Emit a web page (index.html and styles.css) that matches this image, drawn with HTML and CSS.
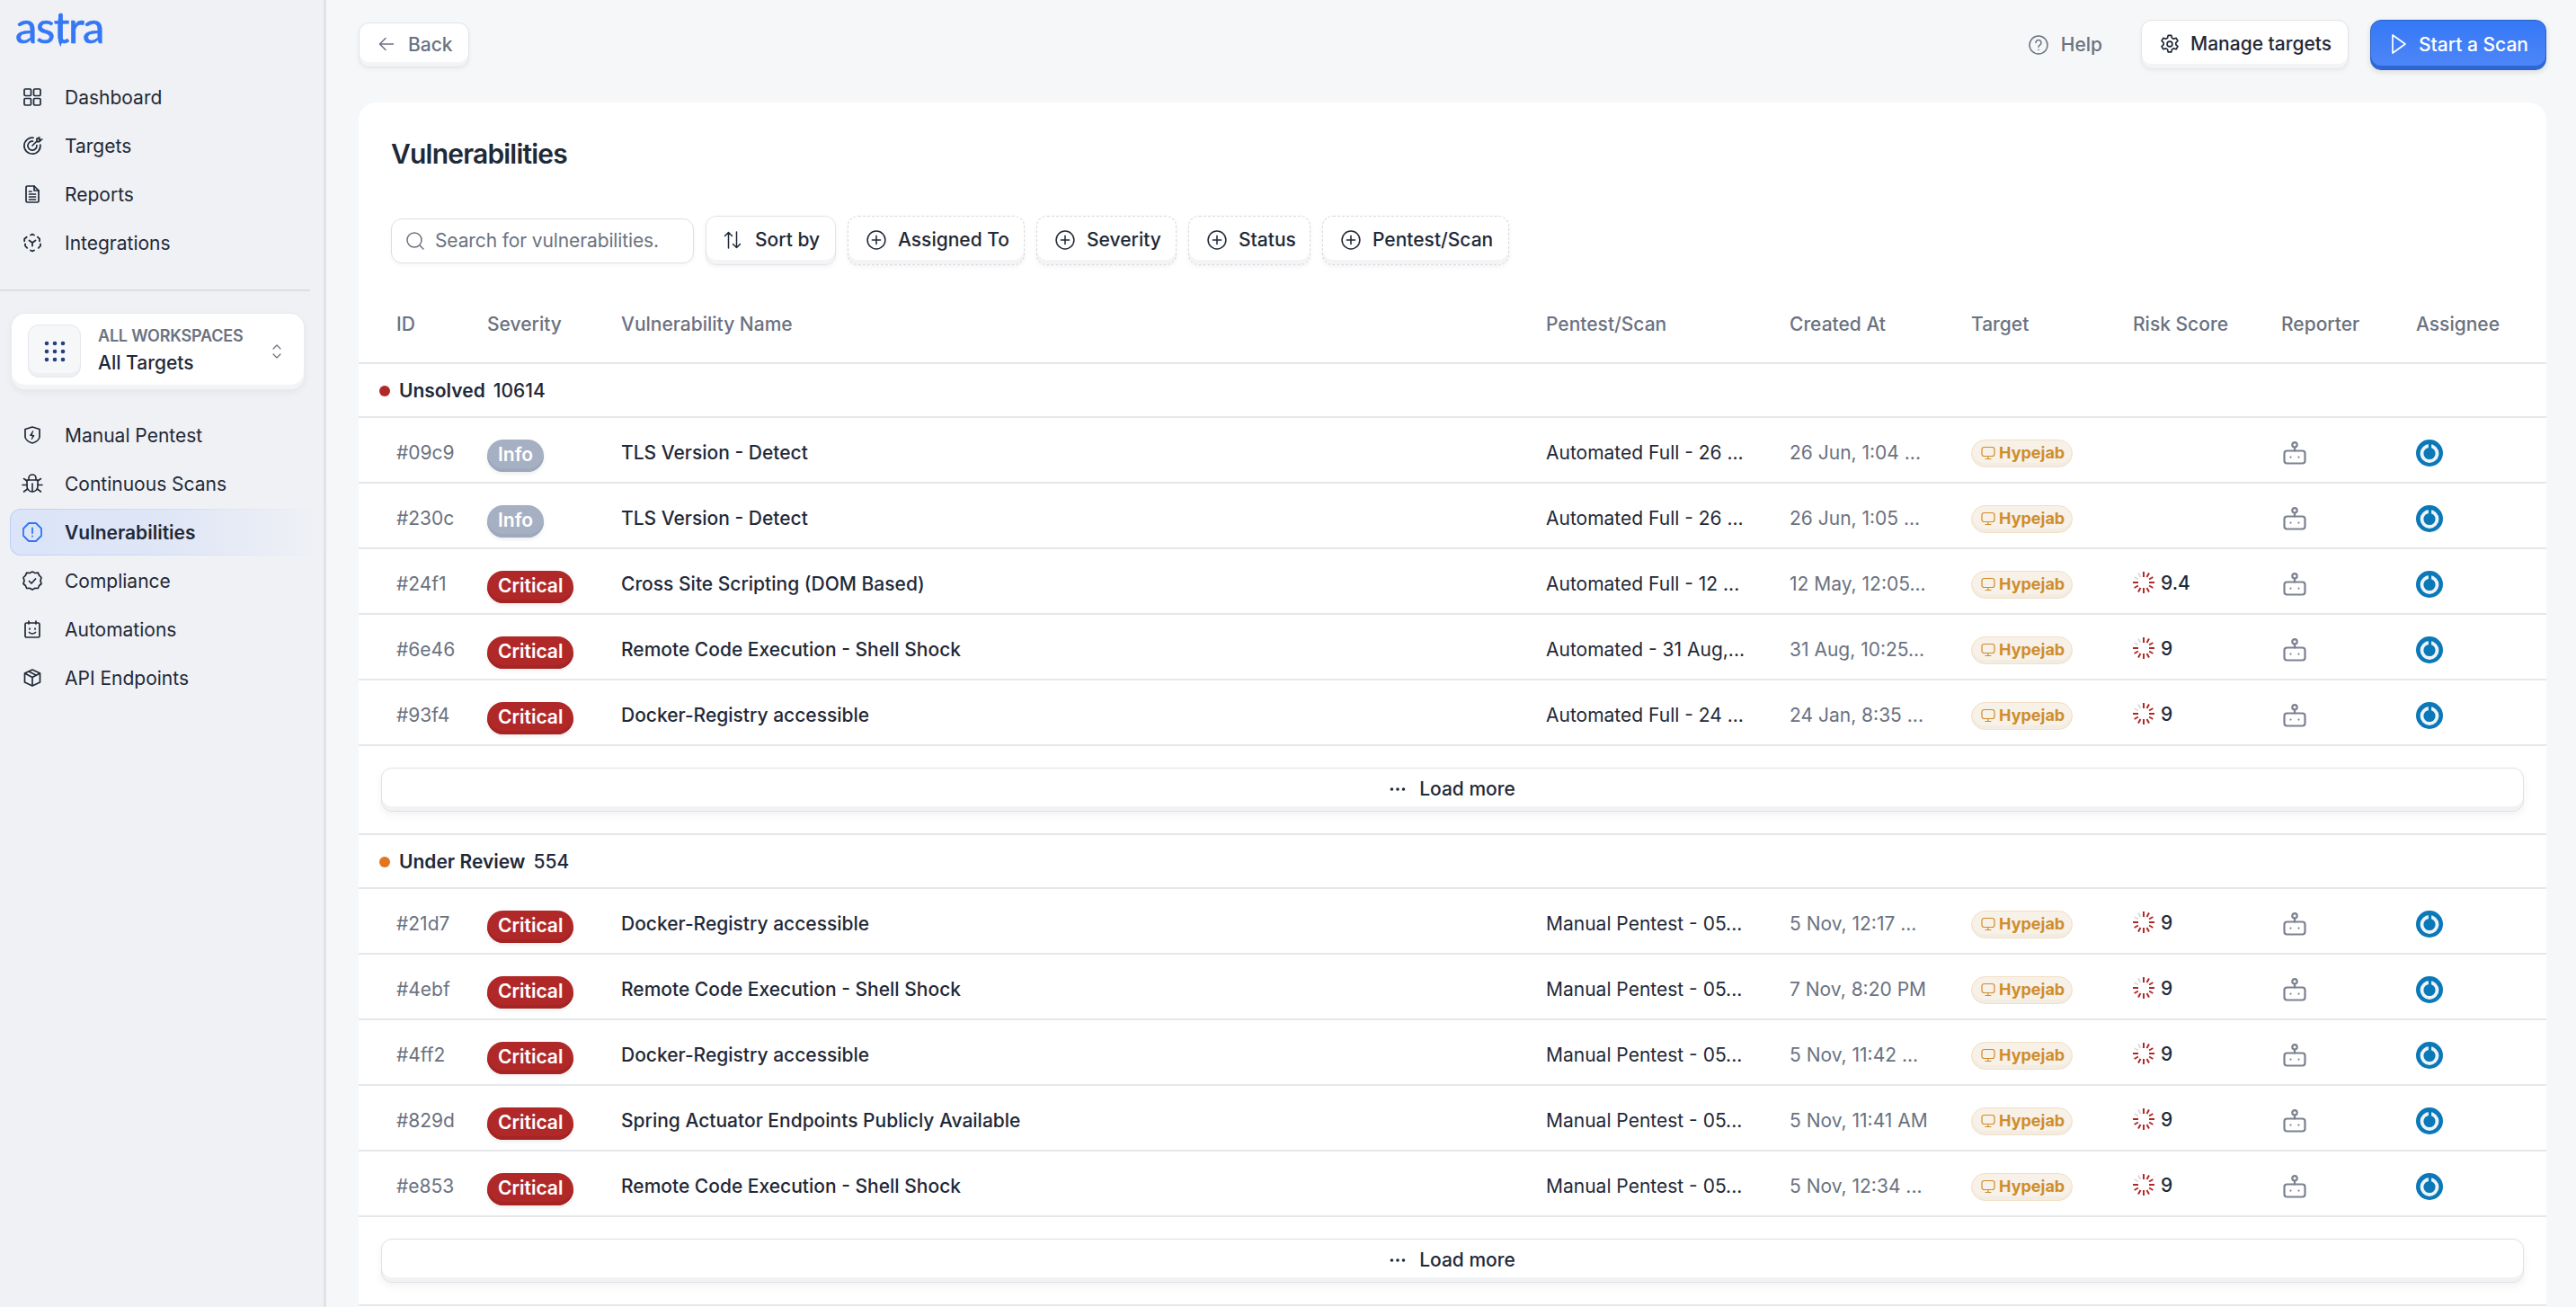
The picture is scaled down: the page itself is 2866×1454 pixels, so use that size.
FILE: index.html
```html
<!DOCTYPE html>
<html lang="en">

<head>
	<meta charset="UTF-8" />
	<title>Vulnerabilities</title>
	<link rel="stylesheet" href="styles.css">
</head>

<body>
	<svg class="icon-defs" width="0" height="0">
		<symbol id="i-monitor" viewBox="0 0 16 16" fill="none" stroke="currentColor" stroke-width="1.2" stroke-linecap="round" stroke-linejoin="round">
			<rect x="1" y="1.5" width="14" height="10" rx="2.5" />
			<path d="M8 11.5v2.5M5 14.5h6" />
		</symbol>
		<symbol id="i-robot" viewBox="0 0 26 26" fill="none" stroke="currentColor" stroke-width="2.2" stroke-linecap="round" stroke-linejoin="round">
			<circle cx="13" cy="3.800" r="2.700" />
			<path d="M13 6.500V10.500" />
			<rect x="1.500" y="10.500" width="23" height="14" rx="3" />
			<path d="M8.500 17.500v.1M17.500 17.500v.1" />
		</symbol>
		<symbol id="i-assignee" viewBox="0 0 30 30">
			<circle cx="15" cy="15" r="15" fill="#0b78b8" />
			<circle cx="15" cy="15.500" r="8.500" fill="none" stroke="#eef4f8" stroke-width="3.800" />
			<path d="M15.500 4.500v10" stroke="#0b78b8" stroke-width="3.200" stroke-linecap="round" />
		</symbol>
		<symbol id="i-spinner" viewBox="0 0 24 24" fill="none" stroke-width="2">
			<g stroke="#b12828">
				<path d="M12 0v6" />
				<path d="M18 1.600l-2.500 4.300" />
				<path d="M22.400 6l-4.300 2.500" />
				<path d="M24 12h-6" />
				<path d="M22.400 18l-4.300-2.500" />
				<path d="M18 22.400l-2.500-4.300" />
				<path d="M12 24v-6" />
				<path d="M6 22.400l2.500-4.300" />
				<path d="M1.600 18l4.300-2.500" />
				<path d="M0 12h6" />
			</g>
			<g stroke="#dcdcdc">
				<path d="M1.600 6l4.300 2.500" />
				<path d="M6 1.600l2.500 4.300" />
			</g>
		</symbol>
		<symbol id="i-plus" viewBox="0 0 20 20" fill="none" stroke="currentColor" stroke-width="1.4" stroke-linecap="round">
			<circle cx="10" cy="10" r="9" />
			<path d="M10 5.8v8.4M5.8 10h8.4" />
		</symbol>
		<symbol id="i-dots" viewBox="0 0 18 6" fill="currentColor">
			<circle cx="2.5" cy="3" r="1.8" />
			<circle cx="9" cy="3" r="1.8" />
			<circle cx="15.5" cy="3" r="1.8" />
		</symbol>
	</svg>

	<div class="layout">
		<aside class="sidebar">
			<div class="logo">as<span class="logo-t">t</span>ra</div>
			<ul class="nav">
				<li class="nav-item">
					<svg class="nav-icon" viewBox="0 0 20 20" fill="none" stroke="currentColor" stroke-width="1.7" stroke-linejoin="round">
						<rect x="1" y="1" width="7.5" height="7.5" rx="1.2" />
						<rect x="11.5" y="1" width="7.5" height="7.5" rx="1.2" />
						<rect x="1" y="11.5" width="7.5" height="7.5" rx="1.2" />
						<rect x="11.5" y="11.5" width="7.5" height="7.5" rx="1.2" />
					</svg>
					<span>Dashboard</span>
				</li>
				<li class="nav-item">
					<svg class="nav-icon" viewBox="0 0 20 20" fill="none" stroke="currentColor" stroke-width="1.7" stroke-linecap="round">
						<path d="M11 1.3A9 9 0 1 0 18.8 9" />
						<path d="M10.5 5.2A5 5 0 1 0 14.9 9.6" />
						<path d="M10 10l5-5M15 5V2.2l2.6-1.2v2.4H20L17.6 5.6H15" />
					</svg>
					<span>Targets</span>
				</li>
				<li class="nav-item">
					<svg class="nav-icon" viewBox="0 0 20 20" fill="none" stroke="currentColor" stroke-width="1.7" stroke-linejoin="round" stroke-linecap="round">
						<path d="M3 2.5A1.5 1.5 0 0 1 4.5 1H12l5 5v11.500A1.500 1.500 0 0 1 15.500 19h-11A1.500 1.500 0 0 1 3 17.500z" />
						<path d="M12 1v5h5M6.500 10h7M6.500 13h7M6.500 16h7M6.500 7h2.500" />
					</svg>
					<span>Reports</span>
				</li>
				<li class="nav-item">
					<svg class="nav-icon" viewBox="0 0 20 20" fill="none" stroke="currentColor" stroke-width="1.8" stroke-linecap="round" stroke-linejoin="round">
						<path d="M8 1.500l2-.8 2 .8M15.800 3.700l2.200 2v2.500M19 11.500v2l-2.200 2.300M12 18.500l-2 .8-2-.8M4.200 15.800L2 13.500v-2M1.200 8.200V5.700l2.500-2" />
						<path d="M6.500 7.500L10 10l3.500-2.500M10 10v3.500" />
					</svg>
					<span>Integrations</span>
				</li>
			</ul>
			<div class="sidebar-divider"></div>
			<div class="workspace">
				<div class="workspace-tile">
					<svg width="24" height="24" viewBox="0 0 24 24" fill="#24407c">
						<circle cx="3" cy="3" r="2.300" />
						<circle cx="12" cy="3" r="2.300" />
						<circle cx="21" cy="3" r="2.300" />
						<circle cx="3" cy="12" r="2.300" />
						<circle cx="12" cy="12" r="2.300" />
						<circle cx="21" cy="12" r="2.300" />
						<circle cx="3" cy="21" r="2.300" />
						<circle cx="12" cy="21" r="2.300" />
						<circle cx="21" cy="21" r="2.300" />
					</svg>
				</div>
				<div class="workspace-text">
					<div class="workspace-label">ALL WORKSPACES</div>
					<div class="workspace-name">All Targets</div>
				</div>
				<svg class="workspace-chevrons" width="10" height="16" viewBox="0 0 10 16" fill="none" stroke="#6b7280" stroke-width="1.200" stroke-linecap="round" stroke-linejoin="round">
					<path d="M1 5l4-4 4 4M1 11l4 4 4-4" />
				</svg>
			</div>
			<ul class="nav">
				<li class="nav-item">
					<svg class="nav-icon" viewBox="0 0 20 20" fill="none" stroke="currentColor" stroke-width="1.700" stroke-linejoin="round">
						<path d="M2 3.500L10 1l8 2.500v8.500c0 3-4 5.800-8 7-4-1.200-8-4-8-7z" />
						<path d="M11 5l-3.500 5.500h4.500L9 15" fill="currentColor" stroke-width="1" />
					</svg>
					<span>Manual Pentest</span>
				</li>
				<li class="nav-item">
					<svg class="nav-icon nav-icon-bug" viewBox="0 0 24 24" fill="none" stroke="currentColor" stroke-width="1.600" stroke-linecap="round" stroke-linejoin="round">
						<path d="M8 8V6a4 4 0 0 1 8 0v2" />
						<path d="M6 8h12v7a6 6 0 0 1-12 0z" />
						<path d="M12 12v9M6 9L2.500 6.500M18 9l3.500-2.500M6 13.500H1M18 13.500h5M6.500 18L2.500 21M17.500 18l4 3" />
					</svg>
					<span>Continuous Scans</span>
				</li>
				<li class="nav-item nav-item-active">
					<svg class="nav-icon nav-icon-active" viewBox="0 0 22 22" fill="none" stroke="currentColor" stroke-width="1.800" stroke-linecap="round" stroke-linejoin="round">
						<path d="M7 1h8l6 6v8l-6 6H7l-6-6V7z" />
						<path d="M11 6.500v5.500M11 15.500v.2" />
					</svg>
					<span>Vulnerabilities</span>
				</li>
				<li class="nav-item">
					<svg class="nav-icon nav-icon-wide" viewBox="0 0 22 22" fill="none" stroke="currentColor" stroke-width="1.700" stroke-linecap="round" stroke-linejoin="round">
						<path d="M11 1l3 1.500 3.300-.3 1.300 3 2.400 2.300-1 3.500 1 3.500-2.400 2-1.300 3-3.300-.2-3 1.700-3-1.700-3.300.2-1.300-3L1 14.500l1-3.500-1-3.500 2.400-2.300 1.300-3 3.300.3z" />
						<path d="M7.500 11.500l2.500 2.500 4.500-5" />
					</svg>
					<span>Compliance</span>
				</li>
				<li class="nav-item">
					<svg class="nav-icon" viewBox="0 0 20 20" fill="none" stroke="currentColor" stroke-width="1.700" stroke-linecap="round" stroke-linejoin="round">
						<rect x="2" y="3" width="16" height="16" rx="1.500" />
						<path d="M6 1v3M14 1v3M7 9v1M13 9v1M6.500 13.500c2 2 5 2 7 0" />
					</svg>
					<span>Automations</span>
				</li>
				<li class="nav-item">
					<svg class="nav-icon" viewBox="0 0 20 20" fill="none" stroke="currentColor" stroke-width="1.700" stroke-linejoin="round">
						<path d="M10 1l8.500 4v10L10 19l-8.500-4V5z" />
						<path d="M1.500 5L10 9.500 18.500 5M10 9.500V19M6 3l8.500 4.200" />
					</svg>
					<span>API Endpoints</span>
				</li>
			</ul>
		</aside>

		<main class="main">
			<div class="topbar">
				<button class="btn btn-back">
					<svg width="18" height="16" viewBox="0 0 18 16" fill="none" stroke="currentColor" stroke-width="1.500" stroke-linecap="round" stroke-linejoin="round">
						<path d="M16.500 8H1.500M8 1.500L1.500 8 8 14.500" />
					</svg>
					Back
				</button>
				<div class="topbar-right">
					<span class="help">
						<svg width="22" height="22" viewBox="0 0 22 22" fill="none" stroke="currentColor" stroke-width="1.500" stroke-linecap="round" stroke-linejoin="round">
							<circle cx="11" cy="11" r="10" />
							<path d="M8 8.500a3 3 0 1 1 4.500 2.600c-1 .6-1.500 1-1.500 2.200M11 16.300v.1" />
						</svg>
						Help
					</span>
					<button class="btn btn-manage">
						<svg width="22" height="22" viewBox="0 0 24 24" fill="none" stroke="currentColor" stroke-width="1.800" stroke-linecap="round" stroke-linejoin="round">
							<circle cx="12" cy="12" r="3.200" />
							<path d="M10 1.500h4l.7 3.200 2 1.100 3.100-1 2 3.400-2.400 2.200v2.300l2.400 2.200-2 3.400-3.100-1-2 1.100-.7 3.200h-4l-.7-3.200-2-1.100-3.100 1-2-3.400 2.400-2.200v-2.300L2.200 8.200l2-3.400 3.100 1 2-1.100z" />
						</svg>
						Manage targets
					</button>
					<button class="btn btn-primary">
						<svg width="18" height="24" viewBox="0 0 18 24" fill="none" stroke="currentColor" stroke-width="1.700" stroke-linejoin="round">
							<path d="M2 2l14 10L2 22z" />
						</svg>
						Start a Scan
					</button>
				</div>
			</div>

			<section class="card">
				<h1 class="card-title">Vulnerabilities</h1>
				<div class="filters">
					<label class="search">
						<svg width="20" height="20" viewBox="0 0 20 20" fill="none" stroke="#6b7280" stroke-width="1.500" stroke-linecap="round">
							<circle cx="9" cy="9" r="8" />
							<path d="M15 15l4 4" />
						</svg>
						<span class="search-text">Search for vulnerabilities.</span>
					</label>
					<button class="btn btn-filter btn-sort">
						<svg width="20" height="20" viewBox="0 0 20 20" fill="none" stroke="currentColor" stroke-width="1.500" stroke-linecap="round" stroke-linejoin="round">
							<path d="M5.500 19V1.500M1.500 5.500l4-4 4 4M14.500 1v17.500M10.500 14.500l4 4 4-4" />
						</svg>
						Sort by
					</button>
					<button class="btn btn-filter btn-dashed btn-assigned"><svg class="plus"><use href="#i-plus" /></svg>Assigned To</button>
					<button class="btn btn-filter btn-dashed btn-severity"><svg class="plus"><use href="#i-plus" /></svg>Severity</button>
					<button class="btn btn-filter btn-dashed btn-status"><svg class="plus"><use href="#i-plus" /></svg>Status</button>
					<button class="btn btn-filter btn-dashed btn-scan"><svg class="plus"><use href="#i-plus" /></svg>Pentest/Scan</button>
				</div>

				<table class="vulns">
					<colgroup>
						<col class="col-id">
						<col class="col-severity">
						<col class="col-name">
						<col class="col-scan">
						<col class="col-created">
						<col class="col-target">
						<col class="col-risk">
						<col class="col-reporter">
						<col class="col-assignee">
					</colgroup>
					<thead>
						<tr>
							<th>ID</th>
							<th>Severity</th>
							<th>Vulnerability Name</th>
							<th>Pentest/Scan</th>
							<th>Created At</th>
							<th>Target</th>
							<th>Risk Score</th>
							<th>Reporter</th>
							<th>Assignee</th>
						</tr>
					</thead>
					<tbody>
						<tr class="group-row">
							<td colspan="9"><span class="dot dot-red"></span><b>Unsolved</b><span class="group-count">10614</span></td>
						</tr>
						<tr>
							<td class="cell-id">#09c9</td>
							<td><span class="badge badge-info">Info</span></td>
							<td>TLS Version - Detect</td>
							<td class="cell-scan">Automated Full - 26 ...</td>
							<td class="cell-date">26 Jun, 1:04 ...</td>
							<td><span class="pill"><svg><use href="#i-monitor" /></svg>Hypejab</span></td>
							<td></td>
							<td><svg class="robot"><use href="#i-robot" /></svg></td>
							<td><svg class="assignee"><use href="#i-assignee" /></svg></td>
						</tr>
						<tr>
							<td class="cell-id">#230c</td>
							<td><span class="badge badge-info">Info</span></td>
							<td>TLS Version - Detect</td>
							<td class="cell-scan">Automated Full - 26 ...</td>
							<td class="cell-date">26 Jun, 1:05 ...</td>
							<td><span class="pill"><svg><use href="#i-monitor" /></svg>Hypejab</span></td>
							<td></td>
							<td><svg class="robot"><use href="#i-robot" /></svg></td>
							<td><svg class="assignee"><use href="#i-assignee" /></svg></td>
						</tr>
						<tr>
							<td class="cell-id">#24f1</td>
							<td><span class="badge badge-critical">Critical</span></td>
							<td>Cross Site Scripting (DOM Based)</td>
							<td class="cell-scan">Automated Full - 12 ...</td>
							<td class="cell-date">12 May, 12:05...</td>
							<td><span class="pill"><svg><use href="#i-monitor" /></svg>Hypejab</span></td>
							<td><span class="risk"><svg><use href="#i-spinner" /></svg>9.4</span></td>
							<td><svg class="robot"><use href="#i-robot" /></svg></td>
							<td><svg class="assignee"><use href="#i-assignee" /></svg></td>
						</tr>
						<tr>
							<td class="cell-id">#6e46</td>
							<td><span class="badge badge-critical">Critical</span></td>
							<td>Remote Code Execution - Shell Shock</td>
							<td class="cell-scan">Automated - 31 Aug,...</td>
							<td class="cell-date">31 Aug, 10:25...</td>
							<td><span class="pill"><svg><use href="#i-monitor" /></svg>Hypejab</span></td>
							<td><span class="risk"><svg><use href="#i-spinner" /></svg>9</span></td>
							<td><svg class="robot"><use href="#i-robot" /></svg></td>
							<td><svg class="assignee"><use href="#i-assignee" /></svg></td>
						</tr>
						<tr>
							<td class="cell-id">#93f4</td>
							<td><span class="badge badge-critical">Critical</span></td>
							<td>Docker-Registry accessible</td>
							<td class="cell-scan">Automated Full - 24 ...</td>
							<td class="cell-date">24 Jan, 8:35 ...</td>
							<td><span class="pill"><svg><use href="#i-monitor" /></svg>Hypejab</span></td>
							<td><span class="risk"><svg><use href="#i-spinner" /></svg>9</span></td>
							<td><svg class="robot"><use href="#i-robot" /></svg></td>
							<td><svg class="assignee"><use href="#i-assignee" /></svg></td>
						</tr>
						<tr class="more-row">
							<td colspan="9"><button class="btn btn-more"><svg class="dots"><use href="#i-dots" /></svg>Load more</button></td>
						</tr>
						<tr class="group-row">
							<td colspan="9"><span class="dot dot-orange"></span><b>Under Review</b><span class="group-count">554</span></td>
						</tr>
						<tr>
							<td class="cell-id">#21d7</td>
							<td><span class="badge badge-critical">Critical</span></td>
							<td>Docker-Registry accessible</td>
							<td class="cell-scan">Manual Pentest - 05...</td>
							<td class="cell-date">5 Nov, 12:17 ...</td>
							<td><span class="pill"><svg><use href="#i-monitor" /></svg>Hypejab</span></td>
							<td><span class="risk"><svg><use href="#i-spinner" /></svg>9</span></td>
							<td><svg class="robot"><use href="#i-robot" /></svg></td>
							<td><svg class="assignee"><use href="#i-assignee" /></svg></td>
						</tr>
						<tr>
							<td class="cell-id">#4ebf</td>
							<td><span class="badge badge-critical">Critical</span></td>
							<td>Remote Code Execution - Shell Shock</td>
							<td class="cell-scan">Manual Pentest - 05...</td>
							<td class="cell-date">7 Nov, 8:20 PM</td>
							<td><span class="pill"><svg><use href="#i-monitor" /></svg>Hypejab</span></td>
							<td><span class="risk"><svg><use href="#i-spinner" /></svg>9</span></td>
							<td><svg class="robot"><use href="#i-robot" /></svg></td>
							<td><svg class="assignee"><use href="#i-assignee" /></svg></td>
						</tr>
						<tr>
							<td class="cell-id">#4ff2</td>
							<td><span class="badge badge-critical">Critical</span></td>
							<td>Docker-Registry accessible</td>
							<td class="cell-scan">Manual Pentest - 05...</td>
							<td class="cell-date">5 Nov, 11:42 ...</td>
							<td><span class="pill"><svg><use href="#i-monitor" /></svg>Hypejab</span></td>
							<td><span class="risk"><svg><use href="#i-spinner" /></svg>9</span></td>
							<td><svg class="robot"><use href="#i-robot" /></svg></td>
							<td><svg class="assignee"><use href="#i-assignee" /></svg></td>
						</tr>
						<tr>
							<td class="cell-id">#829d</td>
							<td><span class="badge badge-critical">Critical</span></td>
							<td>Spring Actuator Endpoints Publicly Available</td>
							<td class="cell-scan">Manual Pentest - 05...</td>
							<td class="cell-date">5 Nov, 11:41 AM</td>
							<td><span class="pill"><svg><use href="#i-monitor" /></svg>Hypejab</span></td>
							<td><span class="risk"><svg><use href="#i-spinner" /></svg>9</span></td>
							<td><svg class="robot"><use href="#i-robot" /></svg></td>
							<td><svg class="assignee"><use href="#i-assignee" /></svg></td>
						</tr>
						<tr>
							<td class="cell-id">#e853</td>
							<td><span class="badge badge-critical">Critical</span></td>
							<td>Remote Code Execution - Shell Shock</td>
							<td class="cell-scan">Manual Pentest - 05...</td>
							<td class="cell-date">5 Nov, 12:34 ...</td>
							<td><span class="pill"><svg><use href="#i-monitor" /></svg>Hypejab</span></td>
							<td><span class="risk"><svg><use href="#i-spinner" /></svg>9</span></td>
							<td><svg class="robot"><use href="#i-robot" /></svg></td>
							<td><svg class="assignee"><use href="#i-assignee" /></svg></td>
						</tr>
						<tr class="more-row">
							<td colspan="9"><button class="btn btn-more"><svg class="dots"><use href="#i-dots" /></svg>Load more</button></td>
						</tr>
					</tbody>
				</table>
			</section>
		</main>
	</div>
</body>

</html>
```

FILE: styles.css
```css
html,
body {
	margin: 0;
	height: 100%;
	overflow: hidden;
}

body {
	font-family: Inter, "Liberation Sans", sans-serif;
	font-size: 21px;
	color: #1f2937;
	background: #f6f7f9;
}

ul {
	list-style: none;
	margin: 0;
	padding: 0;
}

.icon-defs {
	position: absolute;
}

.layout {
	display: flex;
	height: 1454px;
}

/* sidebar */

.sidebar {
	width: 360px;
	flex: none;
	background: #f0f1f5;
	border-right: 3px solid #e1e3e7;
	padding-top: 11px;
}

.logo {
	font-family: Lato, sans-serif;
	font-size: 49px;
	line-height: 36px;
	height: 70px;
	padding-left: 17px;
	color: #3578f6;
	letter-spacing: -1.4px;
	-webkit-text-stroke: 0.6px #3578f6;
}

.logo-t {
	position: relative;
}

.logo-t::after {
	content: "";
	position: absolute;
	left: 5px;
	top: 16px;
	width: 5px;
	height: 36px;
	background: #3578f6;
	clip-path: polygon(0 0, 100% 0, 100% 82%, 50% 100%, 0 82%);
}

.nav-item {
	display: flex;
	align-items: center;
	height: 54px;
	gap: 26px;
	padding-left: 26px;
}

.nav-icon {
	width: 20px;
	height: 20px;
	flex: none;
	overflow: visible;
}

.nav-icon-bug {
	width: 24px;
	height: 24px;
	margin: 0 -2px;
}

.nav-icon-wide,
.nav-icon-active {
	width: 22px;
	height: 22px;
	margin: 0 -1px;
}

.nav-item-active {
	height: 52px;
	margin: 1px 0 1px 11px;
	padding-left: 14px;
	font-weight: 600;
	border: 1px solid transparent;
	border-right: 0;
	border-radius: 12px 0 0 12px;
	background: linear-gradient(90deg, #dbe4f8, #dfe6f6 50%, #f0f1f5) padding-box,
		linear-gradient(90deg, #bdd0f6, #d5e0f6 60%, #f0f1f5) border-box;
	box-sizing: border-box;
}

.nav-icon-active {
	color: #2f74f6;
}

.sidebar-divider {
	height: 2px;
	width: 345px;
	margin-top: 25px;
	background: #dcdee2;
}

.workspace {
	display: flex;
	align-items: center;
	height: 84px;
	width: 325px;
	box-sizing: border-box;
	margin: 25px 0 24px 13px;
	padding: 0 0 1px 18px;
	background: #fff;
	border-radius: 15px;
	box-shadow: inset 0 -5px 0 #f3f4f6, 0 0 0 1px #e9eaee, 0 3px 10px rgba(0, 0, 0, 0.06);
}

.workspace-tile {
	display: flex;
	align-items: center;
	justify-content: center;
	width: 59px;
	height: 59px;
	box-sizing: border-box;
	background: #f6f7f9;
	border: 1px solid #e4e7ec;
	border-radius: 12px;
	box-shadow: inset 0 -4px 0 #eff0f3;
}

.workspace-text {
	margin-left: 19px;
	flex: 1;
}

.workspace-label {
	font-size: 18px;
	font-weight: 600;
	letter-spacing: -0.2px;
	color: #6b7280;
	line-height: 26px;
}

.workspace-name {
	font-weight: 500;
	line-height: 34px;
	color: #1f2937;
}

.workspace-chevrons {
	margin-right: 25px;
}

/* main area */

.main {
	flex: 1;
	padding: 22px 33px 0 36px;
	min-width: 0;
}

.topbar {
	display: flex;
	justify-content: space-between;
	height: 92px;
}

.topbar-right {
	display: flex;
	align-items: flex-start;
	gap: 24px;
}

.btn {
	display: inline-flex;
	align-items: center;
	font-family: inherit;
	font-size: 21px;
	font-weight: 500;
	color: #1f2937;
	background: #fff;
	border: 1px solid #e3e4e8;
	border-radius: 12px;
	box-shadow: inset 0 -5px 0 #f3f4f6, 0 2px 5px rgba(0, 0, 0, 0.05);
	padding: 0 0 2px;
	box-sizing: border-box;
}

.btn-back {
	height: 50px;
	width: 123px;
	margin-top: 3px;
	padding-left: 21px;
	gap: 15px;
	color: #6b7280;
}

.help {
	display: flex;
	align-items: center;
	gap: 14px;
	height: 55px;
	color: #6b7280;
	font-weight: 500;
	margin-right: 19px;
}

.btn-manage {
	height: 55px;
	width: 231px;
	padding-left: 20px;
	gap: 12px;
}

.btn-primary {
	height: 56px;
	width: 196px;
	padding-left: 22px;
	gap: 13px;
	color: #fff;
	background: linear-gradient(180deg, #3578f6, #4f87f8);
	border-color: #2b62c8;
	box-shadow: inset 0 -4px 0 #2f66d6, 0 2px 6px rgba(0, 0, 0, 0.12);
}

.card {
	background: #fff;
	border-radius: 20px 20px 0 0;
	padding-top: 33px;
	height: 1340px;
	overflow: hidden;
}

.card-title {
	margin: 0 0 0 36px;
	font-size: 30px;
	font-weight: 600;
	letter-spacing: -0.8px;
	line-height: 48px;
	color: #1f2937;
}

/* filters */

.filters {
	display: flex;
	align-items: center;
	gap: 13px;
	margin: 45px 0 0 36px;
	height: 55px;
}

.search {
	display: flex;
	align-items: center;
	gap: 12px;
	width: 337px;
	height: 50px;
	box-sizing: border-box;
	padding-left: 16px;
	border: 1px solid #dcdee3;
	border-radius: 12px;
	box-shadow: 0 2px 4px rgba(0, 0, 0, 0.04);
	color: #6b7280;
}

.search-text {
	letter-spacing: -0.12px;
	white-space: nowrap;
}

.btn-filter {
	height: 55px;
	gap: 13px;
	padding-left: 19px;
}

.btn-sort {
	width: 145px;
	gap: 15px;
}

.btn-dashed {
	border: 1px dashed #d7d9de;
	padding-left: 20px;
}

.btn-assigned {
	width: 197px;
}

.btn-severity {
	width: 156px;
}

.btn-status {
	width: 136px;
}

.btn-scan {
	width: 208px;
}

.plus {
	width: 22px;
	height: 22px;
	flex: none;
}

/* table */

.vulns {
	width: 100%;
	table-layout: fixed;
	border-collapse: collapse;
	margin-top: 11px;
}

.col-id { width: 143px; }
.col-severity { width: 149px; }
.col-name { width: 1029px; }
.col-scan { width: 271px; }
.col-created { width: 202px; }
.col-target { width: 180px; }
.col-risk { width: 165px; }
.col-reporter { width: 150px; }
.col-assignee { width: 145px; }

.vulns th {
	height: 98px;
	padding: 12px 0 0;
	text-align: left;
	font-weight: 500;
	color: #6b7280;
	border-bottom: 2px solid #e5e7eb;
	box-sizing: border-box;
}

.vulns th:first-child,
.cell-id {
	padding-left: 42px !important;
}

.vulns td {
	height: 73px;
	padding: 6px 0 0;
	border-bottom: 2px solid #e5e7eb;
	box-sizing: border-box;
	font-weight: 500;
	white-space: nowrap;
}

.vulns td.cell-scan {
	font-weight: 400;
}

.cell-id,
.cell-date {
	color: #6b7280;
	font-weight: 400 !important;
}

.group-row td {
	height: 60px;
	padding: 0 0 0 23px;
}

.group-row b {
	font-weight: 600;
}

.dot {
	display: inline-block;
	width: 12px;
	height: 12px;
	border-radius: 50%;
	margin-right: 10px;
	vertical-align: 1px;
}

.dot-red {
	background: #b12828;
}

.dot-orange {
	background: #e2761f;
}

.group-count {
	margin-left: 9px;
}

.badge {
	display: inline-block;
	height: 36px;
	line-height: 34px;
	padding: 0 12px;
	margin-top: 7px;
	font-weight: 600;
	color: #fff;
	border-radius: 18px;
	vertical-align: middle;
	box-sizing: border-box;
}

.badge-info {
	background: #a6b0c3;
	box-shadow: inset 0 -4px 0 #9fa9bd, 0 2px 4px rgba(0, 0, 0, 0.08);
}

.badge-critical {
	background: #b12828;
	box-shadow: inset 0 -4px 0 #a62424, 0 2px 4px rgba(0, 0, 0, 0.08);
}

.pill {
	display: inline-flex;
	align-items: center;
	gap: 4px;
	height: 31px;
	width: 113px;
	padding: 0 0 1px 10px;
	box-sizing: border-box;
	margin-top: 1px;
	font-size: 18px;
	font-weight: 700;
	color: #cf8d2e;
	background: #f8f1e7;
	border: 1px solid #f2dfc6;
	border-radius: 16px;
	box-shadow: inset 0 -4px 0 #f2ece2;
	vertical-align: middle;
}

.pill svg {
	width: 16px;
	height: 16px;
	flex: none;
}

.risk {
	display: inline-flex;
	align-items: center;
	gap: 7px;
	margin-top: 2px;
}

.risk svg {
	width: 24px;
	height: 24px;
	flex: none;
}

.robot {
	display: block;
	width: 26px;
	height: 26px;
	margin: 0 0 0 2px;
	color: #7b8190;
}

.assignee {
	display: block;
	width: 30px;
	height: 30px;
}

.more-row td {
	height: 99px;
	padding: 0 25px 0 25px;
}

.btn-more {
	display: flex;
	justify-content: center;
	width: 2384px;
	height: 49px;
	margin-bottom: 0;
	gap: 15px;
	border-color: #e0e1e5;
	box-shadow: inset 0 -5px 0 #f1f2f4, 0 4px 10px rgba(0, 0, 0, 0.05);
}

.dots {
	width: 18px;
	height: 6px;
}
```
